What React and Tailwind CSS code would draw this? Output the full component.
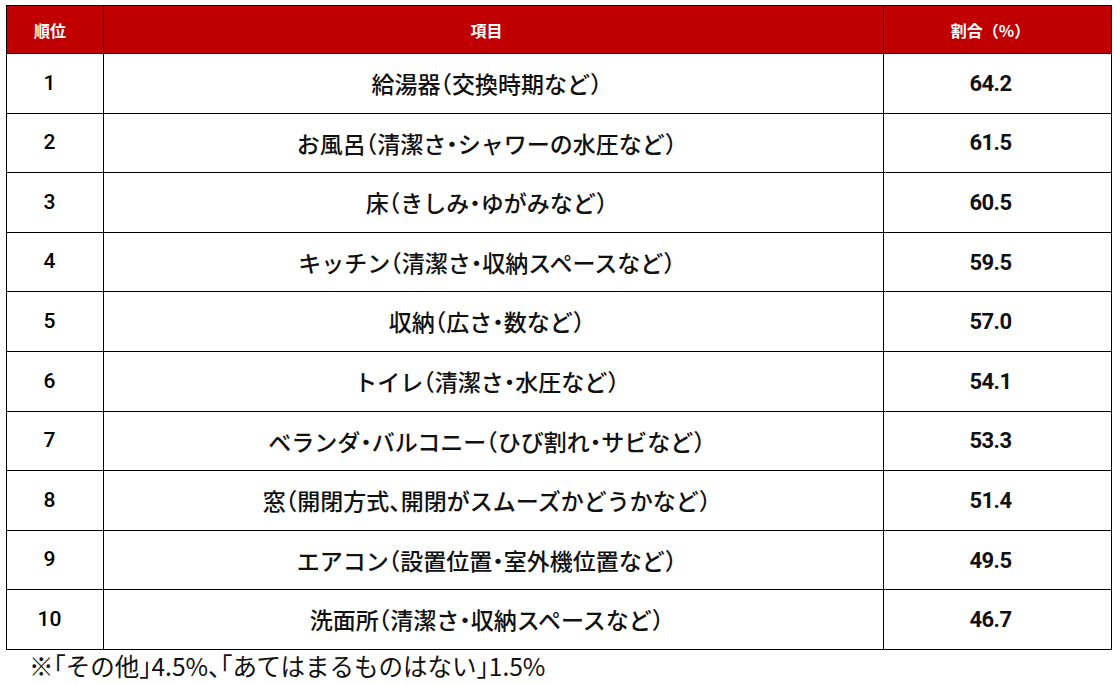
import React from "react";

const rows = [
  ["1", "給湯器（交換時期など）", "64.2"],
  ["2", "お風呂（清潔さ・シャワーの水圧など）", "61.5"],
  ["3", "床（きしみ・ゆがみなど）", "60.5"],
  ["4", "キッチン（清潔さ・収納スペースなど）", "59.5"],
  ["5", "収納（広さ・数など）", "57.0"],
  ["6", "トイレ（清潔さ・水圧など）", "54.1"],
  ["7", "ベランダ・バルコニー（ひび割れ・サビなど）", "53.3"],
  ["8", "窓（開閉方式、開閉がスムーズかどうかなど）", "51.4"],
  ["9", "エアコン（設置位置・室外機位置など）", "49.5"],
  ["10", "洗面所（清潔さ・収納スペースなど）", "46.7"],
];

const jp = { fontFamily: '"Noto Sans CJK JP", "Noto Sans", sans-serif' };
const num = { fontFamily: 'Roboto, "Liberation Sans", sans-serif' };

export default function App() {
  return (
    <div className="w-[1120px] h-[685px] bg-white overflow-hidden" style={jp}>
      <div className="ml-[6px] mt-[5px] w-[1106px] border border-black">
        <div className="grid grid-cols-[96px_780px_1fr] h-[47px] bg-[#c00000] text-white font-bold text-[16px]">
          <div className="flex items-center justify-center pr-[10px]">順位</div>
          <div className="flex items-center justify-center border-l border-black pr-[14px]">項目</div>
          <div className="flex items-center justify-center border-l border-black pr-[14px]">割合（%）</div>
        </div>
        {rows.map(([r, item, v]) => (
          <div
            key={r}
            className="grid grid-cols-[96px_780px_1fr] h-[59.6px] border-t border-black text-[#111]"
          >
            <div
              className="flex items-center justify-center pr-[11px] text-[21px] font-medium text-black"
              style={num}
            >
              {r}
            </div>
            <div className="flex items-center justify-center border-l border-black pr-[14px] text-[23px] font-medium [font-feature-settings:'halt']">
              {item}
            </div>
            <div
              className="flex items-center justify-center border-l border-black pr-[14px] text-[22px] font-bold tracking-[-0.5px]"
              style={num}
            >
              {v}
            </div>
          </div>
        ))}
      </div>
      <div className="ml-[29px] mt-[1px] text-[24.5px] text-[#111] leading-[30px] [font-feature-settings:'halt']">
        ※「その他」4.5%、「あてはまるものはない」1.5%
      </div>
    </div>
  );
}
